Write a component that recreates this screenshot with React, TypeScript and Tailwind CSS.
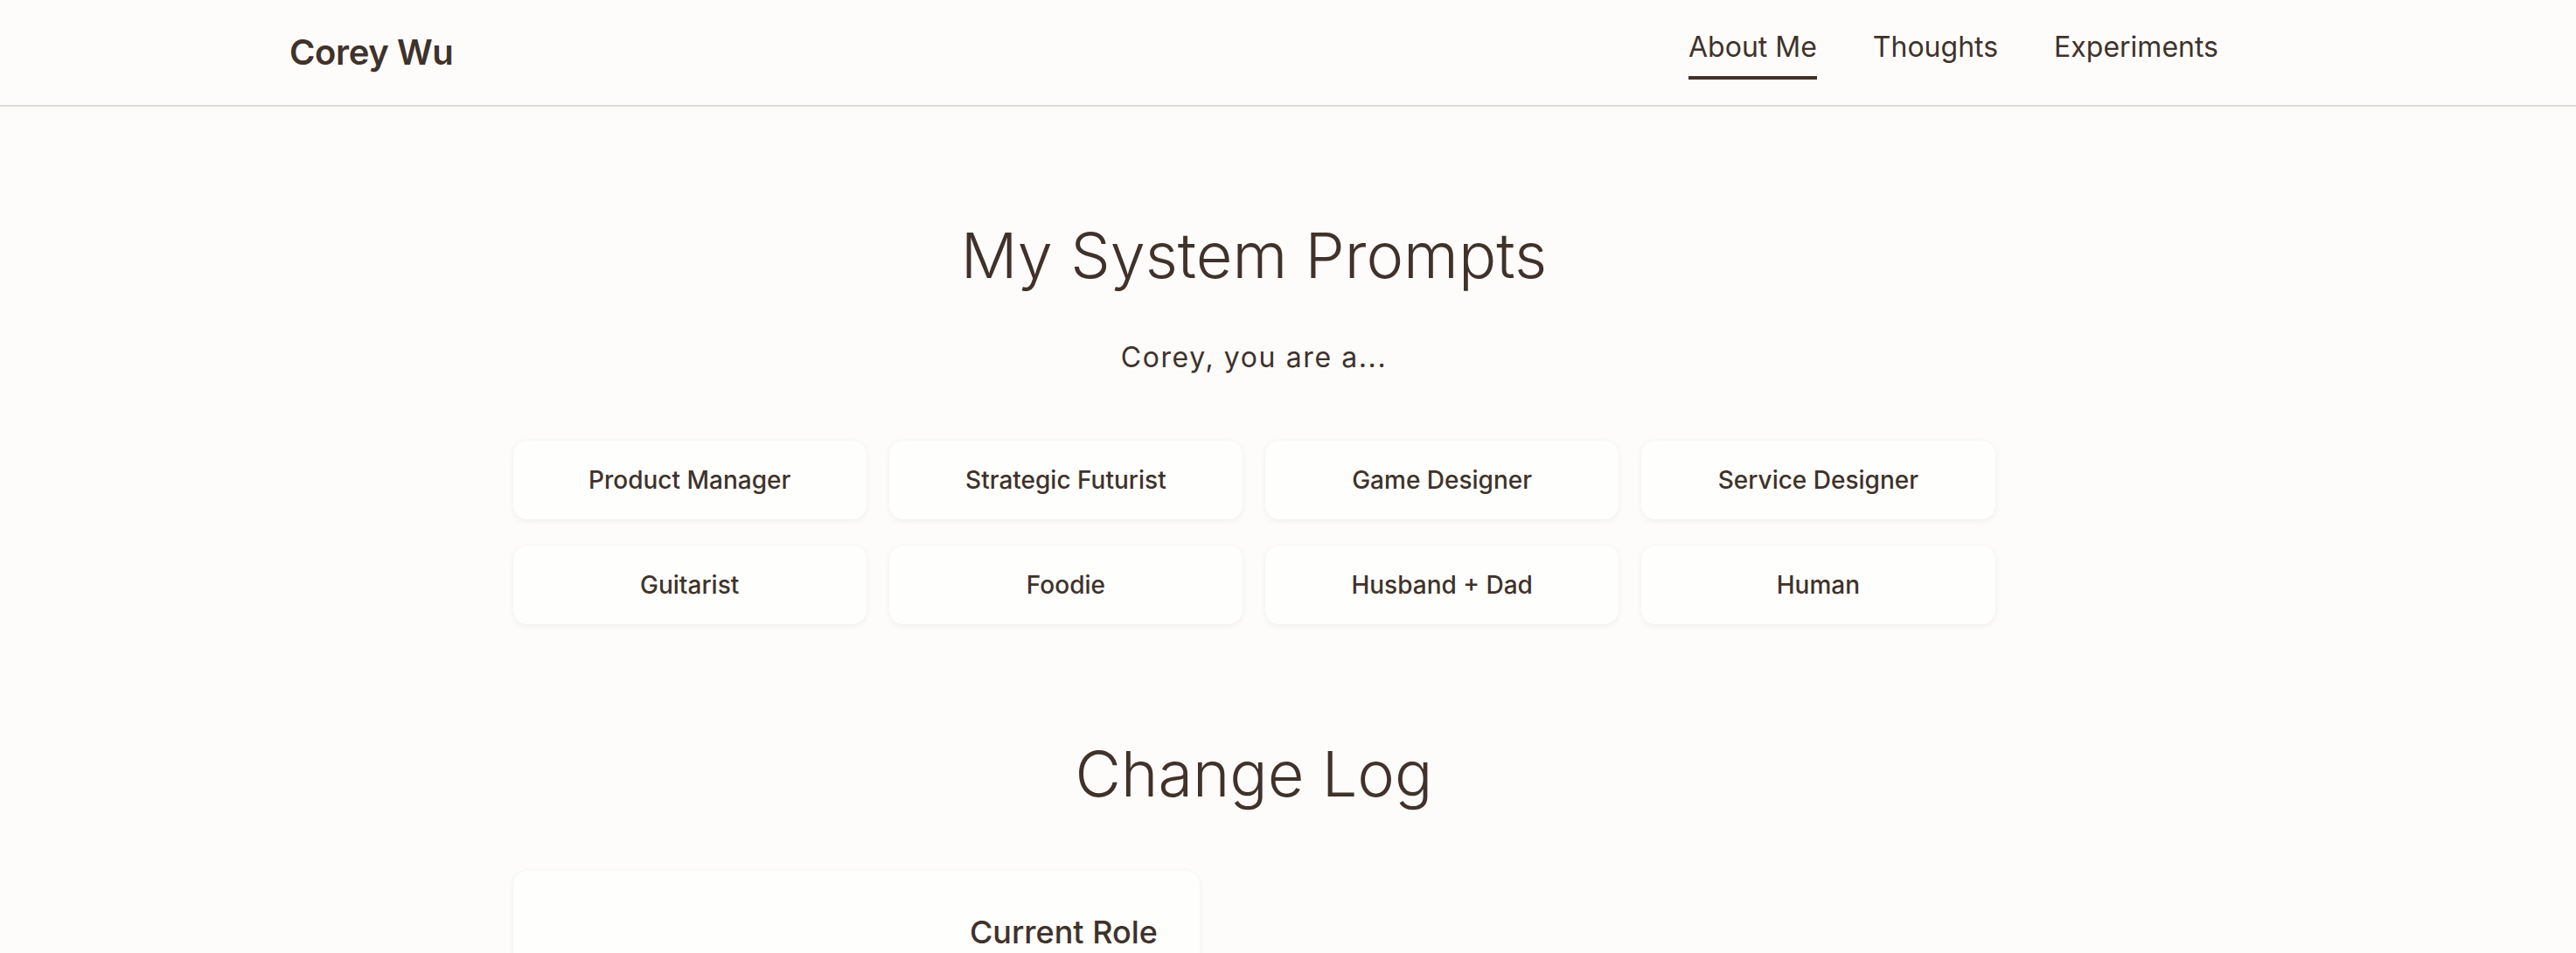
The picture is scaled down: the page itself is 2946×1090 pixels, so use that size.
import React from "react";

const prompts = [
    "Product Manager",
    "Strategic Futurist",
    "Game Designer",
    "Service Designer",
    "Guitarist",
    "Foodie",
    "Husband + Dad",
    "Human",
];

const navLinks = [
    { label: "About Me", active: true },
    { label: "Thoughts", active: false },
    { label: "Experiments", active: false },
];

const App = () => {
    return (
        <div className="min-h-screen bg-[#fdfcfb] text-[#40322a] font-['Inter',sans-serif]">
            <header className="border-b-2 border-[#dedbd6]">
                <div className="pr-[78px]">
                    <div className="mx-auto w-[2206px] h-[120px] flex items-center justify-between">
                        <a href="#" className="text-[40px] leading-[58px] font-semibold tracking-[-0.01em]">
                            Corey Wu
                        </a>
                        <nav className="flex items-center gap-16">
                            {navLinks.map((link) => (
                                <a
                                    key={link.label}
                                    href="#"
                                    className={`text-[32px] leading-[48px] pb-[9px] border-b-4 ${link.active ? "border-[#40322a]" : "border-transparent"}`}
                                >
                                    {link.label}
                                </a>
                            ))}
                        </nav>
                    </div>
                </div>
            </header>

            <main className="pr-[78px]">
                <section className="mx-auto w-[1695px] pt-[134px] flex flex-col items-center">
                    <h1 className="text-7xl font-light leading-none">My System Prompts</h1>
                    <p className="mt-[57px] text-[32px] leading-[48px] tracking-wider">Corey, you are a...</p>

                    <div className="mt-[71px] w-full grid grid-cols-4 gap-x-[26px] gap-y-[30px]">
                        {prompts.map((p) => (
                            <div
                                key={p}
                                className="h-[90px] flex items-center justify-center rounded-2xl bg-[#fefefd] shadow-[0_2px_6px_rgba(64,50,42,0.07)] text-[28px] font-medium"
                            >
                                {p}
                            </div>
                        ))}
                    </div>
                </section>

                <section className="mx-auto w-[1695px] pt-[135px] flex flex-col items-center">
                    <h2 className="text-7xl font-light leading-none">Change Log</h2>

                    <div className="mt-[75px] w-full grid grid-cols-2 gap-x-[124px]">
                        <div className="min-h-[240px] rounded-2xl bg-[#fefefd] shadow-[0_2px_6px_rgba(64,50,42,0.07)] px-12 pt-[50px] pb-12 text-right">
                            <h3 className="text-4xl font-medium">Current Role</h3>
                        </div>
                        <div />
                    </div>
                </section>
            </main>
        </div>
    );
};

export default App;
